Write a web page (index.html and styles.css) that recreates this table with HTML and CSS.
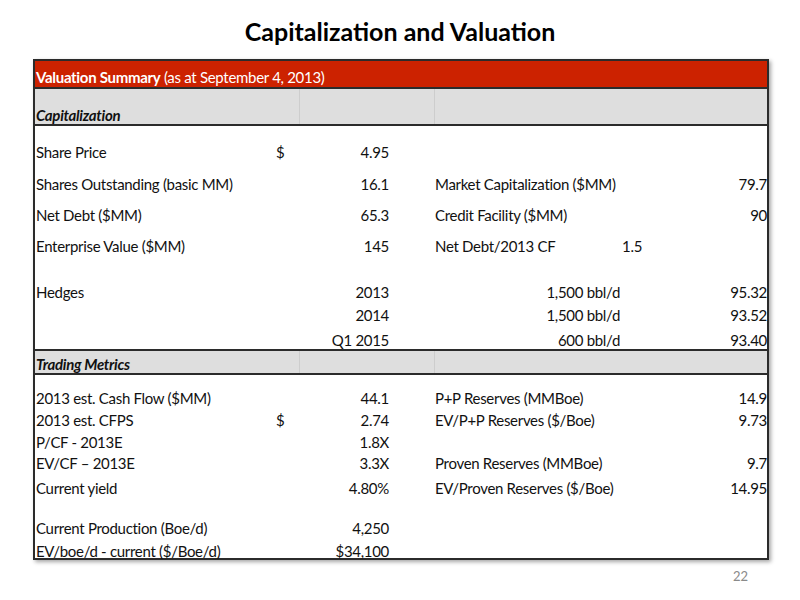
FILE: index.html
```html
<!DOCTYPE html>
<html lang="en">
<head>
    <meta charset="UTF-8">
    <meta name="viewport" content="width=device-width, initial-scale=1.0">
    <link rel="stylesheet" href="styles.css">
    <title>Capitalization and Valuation</title>
</head>
<body>

    <div class="slide">
        <h1 class="title">Capitalization and Valuation</h1>

        <table class="summary">
            <colgroup>
                <col class="c-label">
                <col class="c-cur">
                <col class="c-val">
                <col class="c-label2">
                <col class="c-mid">
                <col class="c-val2">
            </colgroup>
            <tr class="r-red">
                <td colspan="6"><b>Valuation Summary</b> (as at September 4, 2013)</td>
            </tr>
            <tr class="r-section r-cap">
                <td colspan="2">Capitalization</td>
                <td class="split"></td>
                <td colspan="3" class="split"></td>
            </tr>
            <tr class="h37">
                <td>Share Price</td><td class="cur">$</td><td class="num">4.95</td>
                <td></td><td></td><td></td>
            </tr>
            <tr class="h32">
                <td>Shares Outstanding (basic MM)</td><td></td><td class="num">16.1</td>
                <td>Market Capitalization ($MM)</td><td></td><td class="num2">79.7</td>
            </tr>
            <tr class="h31">
                <td>Net Debt ($MM)</td><td></td><td class="num">65.3</td>
                <td>Credit Facility ($MM)</td><td></td><td class="num2">90</td>
            </tr>
            <tr class="h31">
                <td>Enterprise Value ($MM)</td><td></td><td class="num">145</td>
                <td>Net Debt/2013 CF</td><td class="mid">1.5</td><td></td>
            </tr>
            <tr class="h47">
                <td>Hedges</td><td></td><td class="num">2013</td>
                <td class="bbl">1,500 bbl/d</td><td></td><td class="num2">95.32</td>
            </tr>
            <tr class="h23">
                <td></td><td></td><td class="num">2014</td>
                <td class="bbl">1,500 bbl/d</td><td></td><td class="num2">93.52</td>
            </tr>
            <tr class="h25">
                <td></td><td></td><td class="num">Q1 2015</td>
                <td class="bbl">600 bbl/d</td><td></td><td class="num2">93.40</td>
            </tr>
            <tr class="r-section r-trade">
                <td colspan="2">Trading Metrics</td>
                <td class="split"></td>
                <td colspan="3" class="split"></td>
            </tr>
            <tr class="h33">
                <td>2013 est. Cash Flow ($MM)</td><td></td><td class="num">44.1</td>
                <td>P+P Reserves (MMBoe)</td><td></td><td class="num2">14.9</td>
            </tr>
            <tr class="h22">
                <td>2013 est. CFPS</td><td class="cur">$</td><td class="num">2.74</td>
                <td>EV/P+P Reserves ($/Boe)</td><td></td><td class="num2">9.73</td>
            </tr>
            <tr class="h22">
                <td>P/CF - 2013E</td><td></td><td class="num">1.8X</td>
                <td></td><td></td><td></td>
            </tr>
            <tr class="h21">
                <td>EV/CF &ndash; 2013E</td><td></td><td class="num">3.3X</td>
                <td>Proven Reserves (MMBoe)</td><td></td><td class="num2">9.7</td>
            </tr>
            <tr class="h25">
                <td>Current yield</td><td></td><td class="num">4.80%</td>
                <td>EV/Proven Reserves ($/Boe)</td><td></td><td class="num2">14.95</td>
            </tr>
            <tr class="h40">
                <td>Current Production (Boe/d)</td><td></td><td class="num">4,250</td>
                <td></td><td></td><td></td>
            </tr>
            <tr class="h-last">
                <td>EV/boe/d - current ($/Boe/d)</td><td></td><td class="num">$34,100</td>
                <td></td><td></td><td></td>
            </tr>
        </table>

        <div class="page-num">22</div>
    </div>

</body>
</html>
```

FILE: styles.css
```css
body {
    margin: 0;
    background-color: #fff;
    font-family: Lato, "Liberation Sans", sans-serif;
    color: #111;
}

.slide {
    width: 800px;
    height: 600px;
    position: relative;
}

.title {
    margin: 0;
    padding-top: 16px;
    height: 45px;
    box-sizing: border-box;
    text-align: center;
    font-size: 25px;
    font-weight: bold;
    line-height: 31px;
    color: #000;
}

.summary {
    margin: 14px 0 0 33px;
    width: 734px;
    border-collapse: collapse;
    table-layout: fixed;
    border: 2px solid #2b2b2b;
    box-shadow: 2px 2px 4px rgba(0, 0, 0, 0.35);
    font-size: 15px;
    letter-spacing: -0.3px;
}

.c-label { width: 237px; }
.c-cur { width: 28px; }
.c-val { width: 135px; }
.c-label2 { width: 187px; }
.c-mid { width: 60px; }
.c-val2 { width: 87px; }

td {
    padding: 0 1px;
    vertical-align: bottom;
    line-height: 18px;
    white-space: nowrap;
}

.r-red td {
    height: 25px;
    background-color: #cc2200;
    color: #fff;
    border-bottom: 2px solid #2b2b2b;
    padding-bottom: 1px;
}

.r-section td {
    background-color: #dedede;
    font-weight: bold;
    font-style: italic;
    border-bottom: 2px solid #2b2b2b;
}

.r-section td.split {
    border-left: 1px solid #cdcdcd;
}

.r-cap td { height: 35px; }

.r-trade td {
    height: 22px;
    border-top: 2px solid #2b2b2b;
}

.h21 td { height: 21px; }
.h22 td { height: 22px; }
.h23 td { height: 23px; }
.h25 td { height: 25px; }
.h31 td { height: 31px; }
.h32 td { height: 32px; }
.h33 td { height: 32px; }
.h37 td { height: 35px; }
.h40 td { height: 40px; }
.h47 td { height: 46px; }

.h-last td {
    height: 21px;
    line-height: 13px;
}

.cur {
    padding-left: 5px;
}

.num {
    text-align: right;
    padding-right: 45px;
}

.bbl {
    text-align: right;
    padding-right: 1px;
}

.mid {
    padding-left: 1px;
}

.num2 {
    text-align: right;
    padding-right: 0;
}

.page-num {
    position: absolute;
    right: 52px;
    top: 568px;
    font-size: 13px;
    color: #8a8a8a;
}
```
